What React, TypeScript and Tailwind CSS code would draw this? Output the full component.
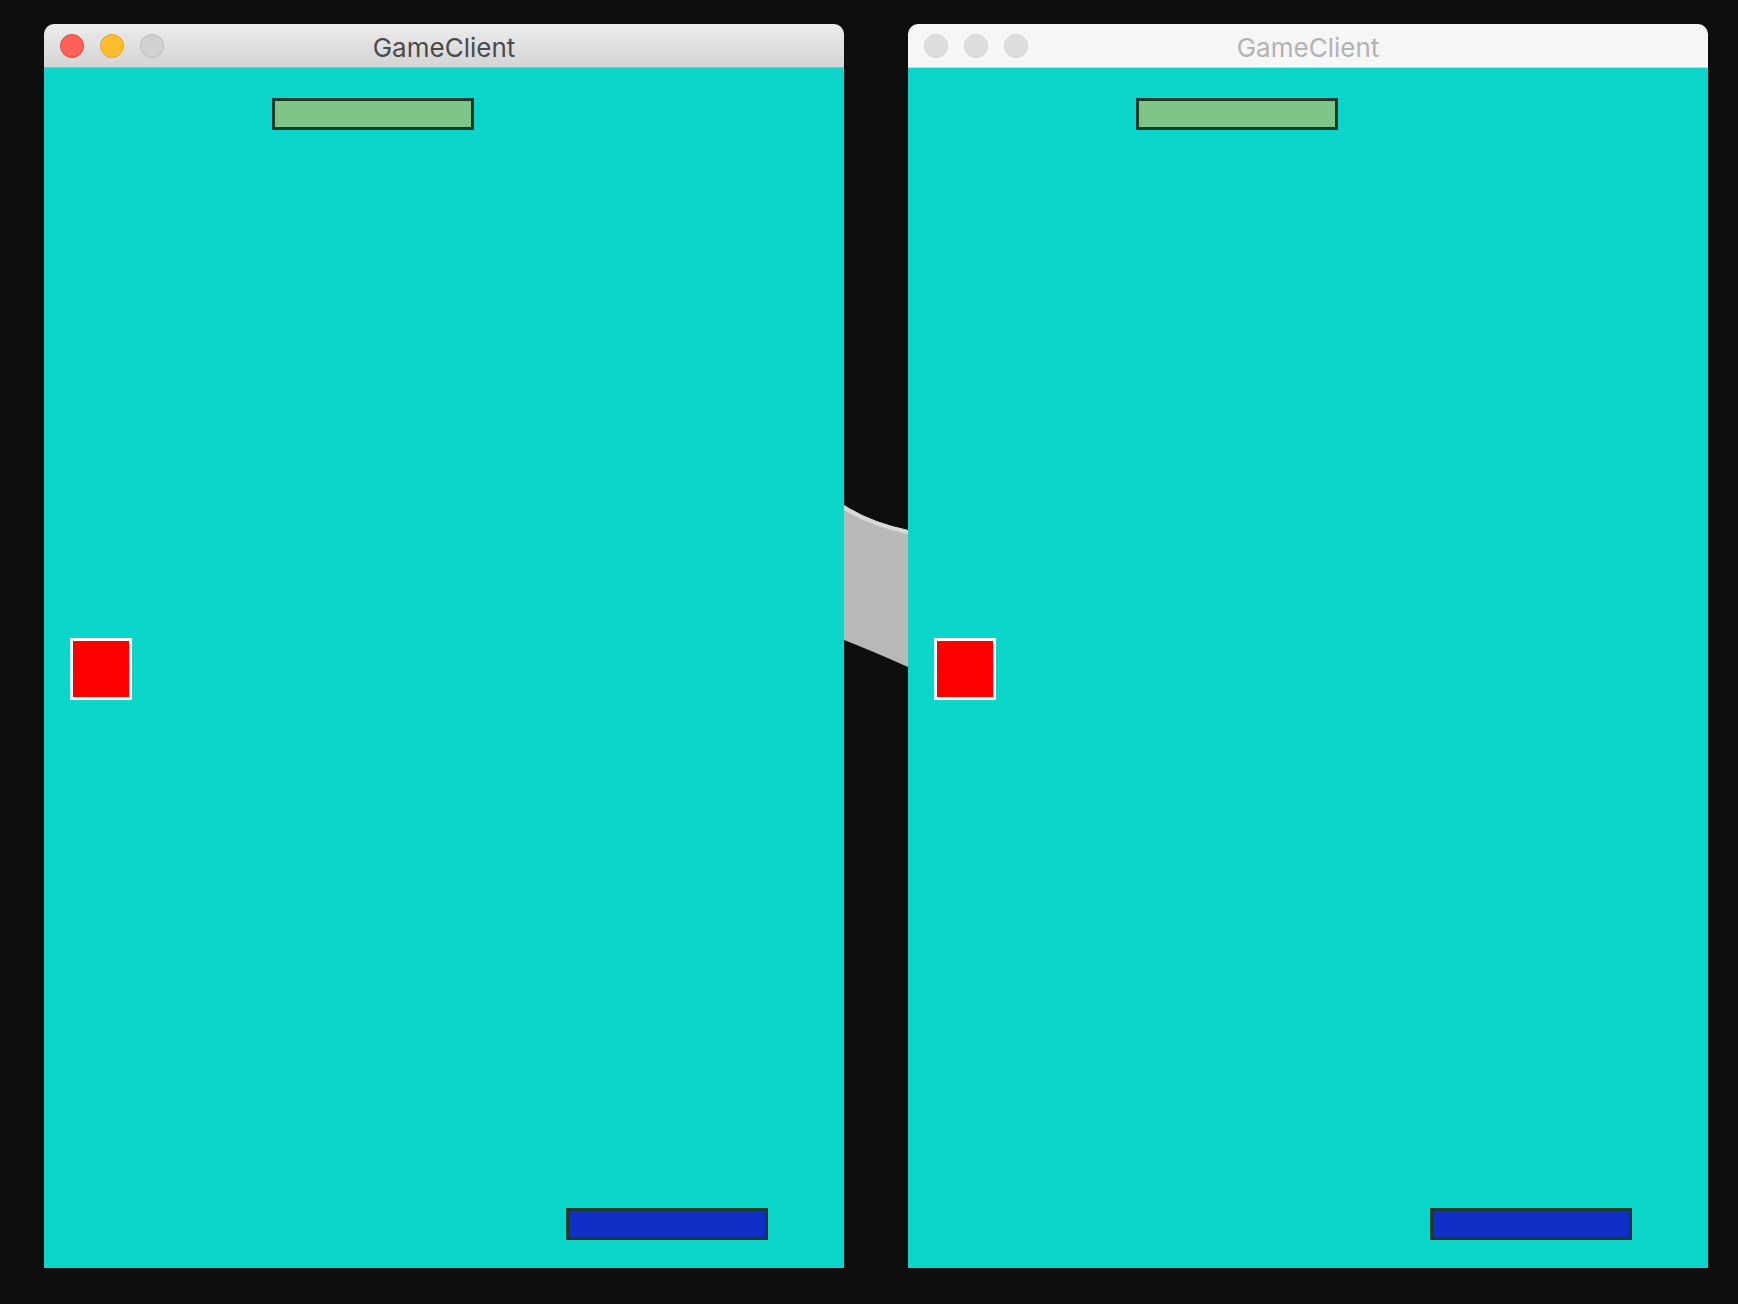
import React from "react";

type Sprite = { x: number; y: number; w: number; h: number; cls: string };

const sprites: Sprite[] = [
    { x: 228, y: 30, w: 202, h: 32, cls: "bg-[#7dc688] border-[3px] border-[#1c3a2a]" },
    { x: 26, y: 570, w: 62, h: 62, cls: "bg-[#ff0000] border-[3px] border-white" },
    { x: 522, y: 1140, w: 202, h: 32, cls: "bg-[#0f2fc6] border-[3px] border-[#1c3a2a]" },
];

function TrafficLights({ active }: { active: boolean }) {
    const lights = active
        ? ["bg-[#fe5f57] border-[#e2463f]", "bg-[#febc2e] border-[#e1a325]", "bg-[#d0d0d0] border-[#b9b9b9]"]
        : ["bg-[#dddddd] border-[#d1d1d1]", "bg-[#dddddd] border-[#d1d1d1]", "bg-[#dddddd] border-[#d1d1d1]"];
    return (
        <div className="flex items-center gap-[16px]">
            {lights.map((c, i) => (
                <span key={i} className={`block w-[24px] h-[24px] rounded-full border ${c}`} />
            ))}
        </div>
    );
}

function GameWindow({ active }: { active: boolean }) {
    return (
        <div className="w-[800px] flex flex-col rounded-t-[10px] overflow-hidden">
            {/* Title bar */}
            <div
                className={
                    active
                        ? "relative h-[44px] flex items-center px-[16px] bg-gradient-to-b from-[#ececec] to-[#d4d4d4] border-b border-[#b4b4b4]"
                        : "relative h-[44px] flex items-center px-[16px] bg-[#f6f6f6] border-b border-[#d6d6d6]"
                }
            >
                <TrafficLights active={active} />
                <div
                    className={`absolute inset-0 pt-[4px] flex items-center justify-center text-[26px] font-[Inter,'Noto_Sans',sans-serif] ${
                        active ? "text-[#4a4a4a]" : "text-[#b2b2b2]"
                    }`}
                >
                    GameClient
                </div>
            </div>

            {/* Game canvas */}
            <div className="relative h-[1200px] bg-[#0cd6c9]">
                {sprites.map((s, i) => (
                    <div
                        key={i}
                        className={`absolute ${s.cls}`}
                        style={{ left: s.x, top: s.y, width: s.w, height: s.h }}
                    />
                ))}
            </div>
        </div>
    );
}

export default function App() {
    return (
        <div className="relative w-[1738px] h-[1304px] overflow-hidden bg-[#0f0f0f]">
            {/* wallpaper patch visible between windows */}
            <svg className="absolute left-0 top-0" width="1738" height="1304">
                <path d="M0 0 H1738 V1304 H0 Z" fill="#0e0e0e" />
                <path d="M844 505 Q870 522 908 530 V667 Q870 650 844 640 Z" fill="#b9b9b9" />
                <path d="M844 505 Q870 522 908 530 L908 534 Q870 526 844 510 Z" fill="#d8d8d8" />
            </svg>
            <div className="relative flex gap-[64px] pl-[44px] pt-[24px]">
                <GameWindow active />
                <GameWindow active={false} />
            </div>
        </div>
    );
}
